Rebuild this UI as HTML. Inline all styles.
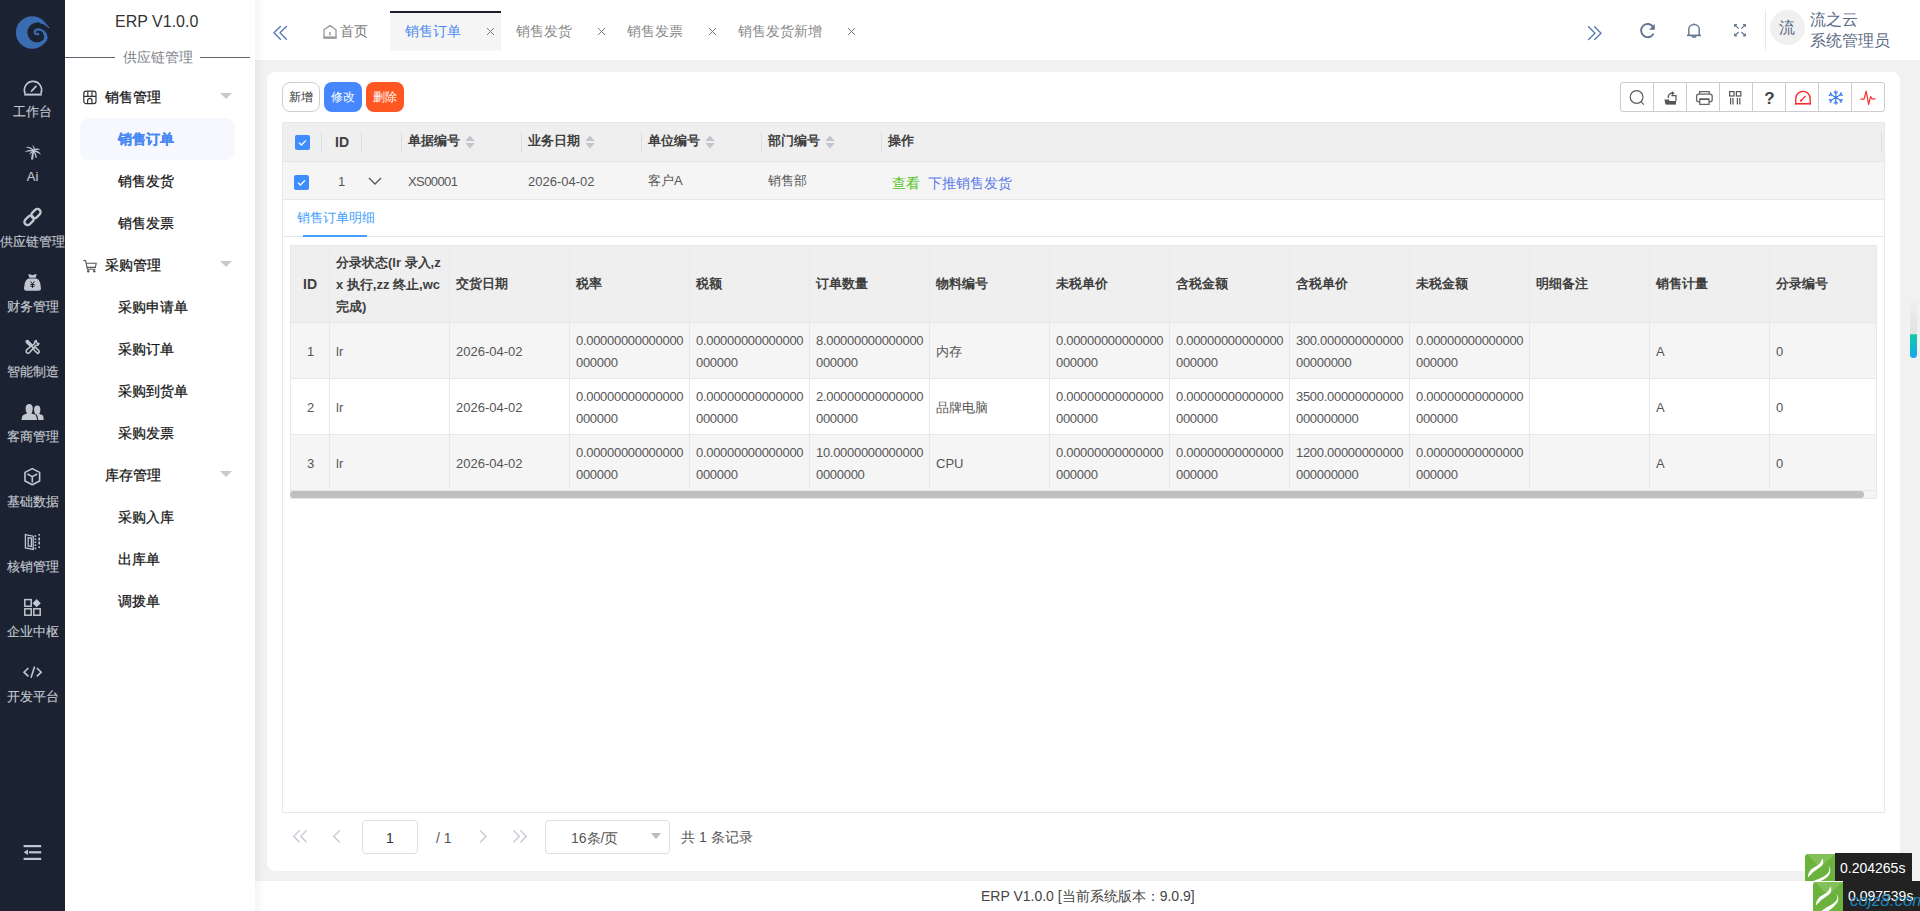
<!DOCTYPE html>
<html><head><meta charset="utf-8">
<style>
*{margin:0;padding:0;box-sizing:border-box}
html,body{width:1920px;height:911px;overflow:hidden}
body{position:relative;font-family:"Liberation Sans",sans-serif;background:#f1f1f1;color:#333}
.a{position:absolute}
.t{position:absolute;white-space:nowrap;line-height:20px}
svg{position:absolute;overflow:visible}
/* sidebar */
#side{left:0;top:0;width:65px;height:911px;background:#1b2232}
.si{position:absolute;left:0;width:65px;text-align:center;font-size:13px;line-height:20px;color:#c3c7cf;white-space:nowrap}
/* menu */
#menu{left:65px;top:0;width:190px;height:911px;background:#fff}
.mg{position:absolute;white-space:nowrap;left:105px;font-size:14px;line-height:20px;color:#111}
.mi{position:absolute;white-space:nowrap;left:118px;font-size:14px;line-height:20px;color:#141414}
.mg,.mi{-webkit-text-stroke:0.25px currentColor}
.si{-webkit-text-stroke:0.15px currentColor}
.caret{position:absolute;left:220px;width:0;height:0;border-left:6px solid transparent;border-right:6px solid transparent;border-top:6px solid #c6c9d0}
/* top bar */
#top{left:255px;top:0;width:1665px;height:60px;background:#fff}
.tab{position:absolute;white-space:nowrap;top:21px;font-size:14px;line-height:20px;color:#8a8a8a}
.x{position:absolute;width:9px;height:9px}
/* card */
#card{left:267px;top:72px;width:1633px;height:799px;background:#fff;border-radius:8px}
.btn{position:absolute;top:82px;height:30px;width:38px;border-radius:8px;font-size:12px;line-height:30px;text-align:center}
.tb{position:absolute;top:82px;height:30px;border:1px solid #ccc;border-radius:3px;background:#fff}
.hd{position:absolute;font-size:13px;font-weight:bold;color:#404040;line-height:20px;white-space:nowrap}
.cell{position:absolute;font-size:13px;color:#555;line-height:20px;white-space:nowrap}
.num{position:absolute;font-size:13px;color:#555;line-height:22px;white-space:nowrap;letter-spacing:-0.3px}
.vl{position:absolute;width:1px;background:#e6e8ee}
.hl{position:absolute;height:1px;background:#e6e8ee}
</style></head><body>

<!-- ============ SIDEBAR ============ -->
<div id="side" class="a">
  <svg style="left:12px;top:12px" width="40" height="40" viewBox="0 0 40 40">
  <circle cx="20.2" cy="20.5" r="16.3" fill="#3a6cb2"/>
  <circle cx="25.2" cy="20.4" r="9.9" fill="#1b2232"/>
  <path d="M25 10.6 Q31 10.2 35.2 14.4 L37.5 13 L40 16 L40 25 L34.6 25 Q35.6 20 33.8 16.4 Q30.6 12 25 10.6 Z" fill="#1b2232"/>
  <path d="M28.4 10.9 Q33.6 11.6 36.7 15.6" fill="none" stroke="#3a6cb2" stroke-width="1.3" stroke-linecap="round"/>
  <path d="M27.2 21.9 Q23.2 22.6 22.7 20.4 Q22.6 17.7 25.8 17.4 Q30.6 17.4 32.9 21.4" fill="none" stroke="#3a6cb2" stroke-width="2.2"/>
  <path d="M32.2 20.2 Q34.6 24.4 33.4 27.6 Q32 30 28.8 31.2" fill="none" stroke="#3a6cb2" stroke-width="3.2"/>
</svg>
</div>

<div class="a" style="left:0;top:0">
  <!-- dashboard -->
  <svg style="left:22px;top:79px" width="22" height="18" viewBox="0 0 22 18">
    <path d="M3.2 14.6 A8.6 8.6 0 1 1 18.8 14.6" fill="none" stroke="#c2c6ce" stroke-width="1.7"/>
    <path d="M2.2 15.6 H19.8" stroke="#c2c6ce" stroke-width="2"/>
    <path d="M9.6 12 L14 7.4" stroke="#c2c6ce" stroke-width="1.8" stroke-linecap="round"/>
  </svg>
  <div class="si" style="top:102px">工作台</div>
  <!-- palm -->
  <svg style="left:20px;top:140px" width="25" height="25" viewBox="0 0 25 25">
    <g fill="#c2c6ce">
      <path d="M13.6 9.6 Q9.6 5.6 5.6 7 Q9.6 8.4 13.4 10.6 Z"/>
      <path d="M13.6 9.8 Q8.6 9.2 4.4 11.8 Q9.4 11.6 13.4 11 Z"/>
      <path d="M13.8 9.8 Q13.6 6.4 12 5 Q15 6.4 15 9.8 Z"/>
      <path d="M13.4 9.4 Q17.4 7.4 20.2 9.4 Q16.8 9.8 13.8 10.8 Z"/>
      <path d="M13.8 10 Q18.6 10.4 21 14.4 Q17.2 12.6 13.6 11.2 Z"/>
      <path d="M13.8 10 Q10.2 11.4 9 15 Q11.6 12.8 14 11.2 Z"/>
      <path d="M12.8 10 Q11.6 14.6 11 19.4 L13.2 19.4 Q13.4 14.6 14.4 10.2 Z"/>
      <path d="M14.2 10.2 Q16.2 13.6 17 17.8 L15.6 17.8 Q14.8 14 13.4 10.8 Z"/>
    </g>
  </svg>
  <div class="si" style="top:167px">Ai</div>
  <!-- link -->
  <svg style="left:20px;top:204px" width="25" height="25" viewBox="0 0 25 25">
    <g fill="none" stroke="#c2c6ce" stroke-width="2.3" transform="rotate(-45 12.5 13)">
      <rect x="2.4" y="9.8" width="10.6" height="6.4" rx="3.2"/>
      <rect x="12" y="9.8" width="10.6" height="6.4" rx="3.2"/>
    </g>
  </svg>
  <div class="si" style="top:232px">供应链管理</div>
  <!-- money bag -->
  <svg style="left:20px;top:269px" width="25" height="25" viewBox="0 0 25 25">
    <path d="M8.2 5.2 Q10.5 5 12.5 6.2 Q14.5 5 16.8 5.2 L15.6 8.8 H9.4 Z" fill="#c2c6ce"/>
    <path d="M8.4 9.6 H16.6 Q19.2 10.5 20.2 14 L21 19.4 Q21 21.8 18.6 21.8 H6.4 Q4 21.8 4 19.4 L4.8 14 Q5.8 10.5 8.4 9.6 Z" fill="#c2c6ce"/>
    <g stroke="#1b2232" stroke-width="1" fill="none">
      <path d="M10.6 12.4 L12.5 15 L14.4 12.4"/><path d="M12.5 15 V18.8"/><path d="M10.4 15.6 H14.6"/><path d="M10.4 17.2 H14.6"/>
    </g>
  </svg>
  <div class="si" style="top:297px">财务管理</div>
  <!-- tools -->
  <svg style="left:20px;top:335px" width="25" height="25" viewBox="0 0 25 25">
    <g fill="none" stroke="#c2c6ce" stroke-width="1.5" stroke-linejoin="round">
      <path d="M6.2 6 L7.8 5.6 L11.6 9.6 L10.2 11 L6.4 7.4 Z" fill="#c2c6ce"/>
      <path d="M10.8 10.4 L13.2 12.8"/>
      <path d="M13.4 13.2 L15.6 12.4 L19 15.8 Q19.6 17.8 17.8 18.6 L14.2 15.2 Z"/>
      <path d="M16.2 5.4 Q14.2 6.2 14.6 8.6 L7 14.4 Q5.6 15.6 6.4 17.4 Q7.8 18.8 9.6 17.6 L15.6 10.4 Q18.2 10.6 19 8.6 L17.4 8.4 L16.4 7 Z"/>
    </g>
  </svg>
  <div class="si" style="top:362px">智能制造</div>
  <!-- users -->
  <svg style="left:20px;top:400px" width="25" height="25" viewBox="0 0 25 25">
    <path d="M9.2 4 Q12.8 4 12.8 8.6 Q12.8 12 11.4 13.6 Q15.6 14.4 16.4 15.6 Q17 17.6 17 20 H1.6 Q1.6 16.4 3 15.2 Q4.6 14.2 7 13.6 Q5.6 12 5.6 8.6 Q5.6 4 9.2 4 Z" fill="#c2c6ce"/>
    <path d="M17.2 5.4 Q20.4 5.4 20.4 9.4 Q20.4 12.4 19.2 14 Q22.2 14.6 23 15.6 Q23.6 17.4 23.6 20 H17.8 Q17.8 16.8 17 15.2 Q16 14.4 15.2 14 Q14 12.4 14 9.4 Q14 5.4 17.2 5.4 Z" fill="#c2c6ce"/>
    <path d="M16.4 14.6 L17.8 20" stroke="#1b2232" stroke-width="0.8"/>
  </svg>
  <div class="si" style="top:427px">客商管理</div>
  <!-- cube -->
  <svg style="left:20px;top:464px" width="25" height="25" viewBox="0 0 25 25">
    <g fill="none" stroke="#c2c6ce" stroke-width="1.6" stroke-linejoin="round">
      <path d="M12.3 4.6 L19.6 8.4 V17 L12.3 20.8 L5 17 V8.4 Z"/>
      <path d="M7.4 10 L12.3 12.6 L17.2 10 M12.3 12.6 V18.6"/>
    </g>
  </svg>
  <div class="si" style="top:492px">基础数据</div>
  <!-- verification -->
  <svg style="left:20px;top:529px" width="25" height="25" viewBox="0 0 25 25">
    <g fill="none" stroke="#c2c6ce" stroke-width="1.3">
      <path d="M5.4 5.6 L13.2 7.2 V20.4 L5.4 19 Z"/>
      <path d="M8.2 8.6 L11.4 9 V17.4 L8.2 17 Z"/>
    </g>
    <g fill="#c2c6ce">
      <rect x="14.6" y="6.2" width="1.6" height="1.6"/><rect x="14.6" y="9.4" width="1.6" height="1.6"/><rect x="14.6" y="12.4" width="1.6" height="1.6"/><rect x="14.6" y="15.4" width="1.6" height="1.6"/><rect x="14.6" y="18.6" width="1.6" height="1.6"/>
      <rect x="18.4" y="5" width="1.6" height="1.6"/><rect x="18.4" y="8.6" width="1.6" height="2.8"/><rect x="18.4" y="12.6" width="1.6" height="2.8"/><rect x="18.4" y="17.4" width="1.6" height="1.6"/>
    </g>
  </svg>
  <div class="si" style="top:557px">核销管理</div>
  <!-- apps -->
  <svg style="left:20px;top:594px" width="25" height="25" viewBox="0 0 25 25">
    <g fill="none" stroke="#c2c6ce" stroke-width="1.5">
      <rect x="4.8" y="5.6" width="6.4" height="6.6"/>
      <rect x="4.8" y="14.8" width="6.4" height="6.4"/>
      <rect x="13.8" y="14.8" width="6.4" height="6.4"/>
    </g>
    <path d="M16.6 5 L20.8 9.2 L16.6 13.2 L12.6 9.2 Z" fill="#c2c6ce"/>
  </svg>
  <div class="si" style="top:622px">企业中枢</div>
  <!-- code -->
  <svg style="left:20px;top:660px" width="25" height="25" viewBox="0 0 25 25">
    <g fill="none" stroke="#c2c6ce" stroke-width="1.6">
      <path d="M8.4 8 L4 12.2 L8.4 16.4"/>
      <path d="M14.6 6.6 L11 17.8"/>
      <path d="M16.8 8 L21.2 12.2 L16.8 16.4"/>
    </g>
  </svg>
  <div class="si" style="top:687px">开发平台</div>
  <!-- collapse -->
  <svg style="left:20px;top:840px" width="25" height="25" viewBox="0 0 25 25">
    <g fill="#c2c6ce">
      <rect x="3.6" y="5" width="17.6" height="2.2"/>
      <rect x="9" y="11.2" width="12.2" height="2.2"/>
      <rect x="3.6" y="17.8" width="17.6" height="2.2"/>
      <path d="M3.6 12.3 L8 9.6 V15 Z"/>
    </g>
  </svg>
</div>


<!-- ============ MENU PANEL ============ -->
<div id="menu" class="a"></div>

<div class="a" style="left:0;top:0">
  <div class="t" style="left:115px;top:12px;font-size:16px;color:#333">ERP V1.0.0</div>
  <div class="a" style="left:65px;top:57px;width:50px;height:1px;background:#5f636b"></div>
  <div class="a" style="left:200px;top:57px;width:50px;height:1px;background:#5f636b"></div>
  <div class="t" style="left:123px;top:47px;font-size:14px;color:#7c7f87">供应链管理</div>

  <svg style="left:83px;top:90px" width="14" height="15" viewBox="0 0 14 15">
    <g fill="none" stroke="#333" stroke-width="1.2">
      <rect x="0.8" y="1.2" width="12.2" height="12.4" rx="2.4"/>
      <path d="M0.8 6.4 H13 M4.8 1.2 V6.4 M9 1.2 V6.4 M4.6 13.6 V10.6 A2.2 2.2 0 0 1 9 10.6 V13.6"/>
    </g>
  </svg>
  <div class="mg" style="top:87px">销售管理</div>
  <div class="caret" style="top:93px"></div>
  <div class="a" style="left:80px;top:118px;width:155px;height:42px;background:#f6f8fe;border-radius:9px"></div>
  <div class="mi" style="top:129px;color:#4a89f3;font-weight:bold">销售订单</div>
  <div class="mi" style="top:171px">销售发货</div>
  <div class="mi" style="top:213px">销售发票</div>

  <svg style="left:83px;top:259px" width="14" height="14" viewBox="0 0 14 14">
    <g fill="none" stroke="#555" stroke-width="1.1">
      <path d="M0.4 1.4 L2.6 1.8 L4.4 10.2 H12.4"/>
      <path d="M3.2 4.2 H13.2 L12.4 8.4 H4"/>
    </g>
    <circle cx="5.2" cy="12.2" r="1.2" fill="#555"/><circle cx="11.2" cy="12.2" r="1.2" fill="#555"/>
  </svg>
  <div class="mg" style="top:255px">采购管理</div>
  <div class="caret" style="top:261px"></div>
  <div class="mi" style="top:297px">采购申请单</div>
  <div class="mi" style="top:339px">采购订单</div>
  <div class="mi" style="top:381px">采购到货单</div>
  <div class="mi" style="top:423px">采购发票</div>

  <div class="mg" style="top:465px">库存管理</div>
  <div class="caret" style="top:471px"></div>
  <div class="mi" style="top:507px">采购入库</div>
  <div class="mi" style="top:549px">出库单</div>
  <div class="mi" style="top:591px">调拨单</div>
</div>


<!-- ============ TOP BAR ============ -->
<div id="top" class="a"></div>

<div class="a" style="left:0;top:0">
  
  <svg style="left:268px;top:18px" width="30" height="30" viewBox="0 0 30 30">
    <g fill="none" stroke="#5a7db4" stroke-width="1.45" stroke-linecap="round" stroke-linejoin="round">
      <path d="M12.4 8.4 L6 14.8 L12.4 21.2"/><path d="M18.4 8.4 L12 14.8 L18.4 21.2"/>
    </g>
  </svg>
  <svg style="left:318px;top:18px" width="30" height="30" viewBox="0 0 30 30">
    <g fill="none" stroke="#9a9a9a" stroke-width="1.5" stroke-linejoin="round">
      <path d="M6 11.8 L12 7.6 L18 11.8 V20 H6 Z" stroke-width="1.35"/>
    </g>
    <path d="M5.4 19.4 H18.6" stroke="#9a9a9a" stroke-width="2"/>
    <path d="M12 14 V17.6" stroke="#9a9a9a" stroke-width="1.4"/>
  </svg>
  <div class="tab" style="left:340px;top:21px;color:#7d7d7d">首页</div>

  <div class="a" style="left:390px;top:11px;width:111px;height:40px;background:#f5f5f5;border-top:2px solid #1a1e2c"></div>
  <div class="tab" style="left:405px;top:21px;color:#4a89f3">销售订单</div>
  <svg class="x" style="left:486px;top:27px" viewBox="0 0 9 9"><path d="M1 1 L8 8 M8 1 L1 8" stroke="#7a7a7a" stroke-width="1"/></svg>
  <div class="tab" style="left:516px;top:21px">销售发货</div>
  <svg class="x" style="left:597px;top:27px" viewBox="0 0 9 9"><path d="M1 1 L8 8 M8 1 L1 8" stroke="#7a7a7a" stroke-width="1"/></svg>
  <div class="tab" style="left:627px;top:21px">销售发票</div>
  <svg class="x" style="left:708px;top:27px" viewBox="0 0 9 9"><path d="M1 1 L8 8 M8 1 L1 8" stroke="#7a7a7a" stroke-width="1"/></svg>
  <div class="tab" style="left:738px;top:21px">销售发货新增</div>
  <svg class="x" style="left:847px;top:27px" viewBox="0 0 9 9"><path d="M1 1 L8 8 M8 1 L1 8" stroke="#7a7a7a" stroke-width="1"/></svg>

  <svg style="left:1582px;top:18px" width="30" height="30" viewBox="0 0 30 30">
    <g fill="none" stroke="#5a7db4" stroke-width="1.45" stroke-linecap="round" stroke-linejoin="round">
      <path d="M6.6 8.8 L13 15.2 L6.6 21.6"/><path d="M12.6 8.8 L19 15.2 L12.6 21.6"/>
    </g>
  </svg>
  <svg style="left:1635px;top:18px" width="25" height="25" viewBox="0 0 25 25">
    <path d="M18.4 9.2 A6.6 6.6 0 1 0 18.6 15.6" fill="none" stroke="#61738f" stroke-width="1.9"/>
    <path d="M19.8 6 V11.8 H14 Z" fill="#61738f"/>
  </svg>
  <svg style="left:1682px;top:18px" width="25" height="25" viewBox="0 0 25 25">
    <g fill="none" stroke="#61738f" stroke-width="1.4">
      <path d="M6.8 17.4 V11 A5.2 4.4 0 0 1 17.2 11 V17.4"/>
      <path d="M10.2 17.6 A1.8 1.8 0 0 0 13.8 17.6"/>
    </g>
    <path d="M5 17.4 H19" stroke="#61738f" stroke-width="1.6"/>
    <path d="M12 5.4 V6.8" stroke="#61738f" stroke-width="1.4"/>
  </svg>
  <svg style="left:1682px;top:18px" width="70" height="25" viewBox="0 0 70 25">
    <g fill="none" stroke="#61738f" stroke-width="1.1">
      <path d="M52.6 6.6 L56.6 10.6 M52.6 6.6 H55 M52.6 6.6 V9"/>
      <path d="M63.4 6.6 L59.4 10.6 M63.4 6.6 H61 M63.4 6.6 V9"/>
      <path d="M52.6 18 L56.6 14 M52.6 18 H55 M52.6 18 V15.6"/>
      <path d="M63.4 18 L59.4 14 M63.4 18 H61 M63.4 18 V15.6"/>
    </g>
  </svg>
  <div class="a" style="left:1765px;top:10px;width:1px;height:40px;background:#e6e8ec"></div>
  <div class="a" style="left:1770px;top:10px;width:35px;height:35px;border-radius:50%;background:#f0f0f0"></div>
  <div class="t" style="left:1779px;top:18px;font-size:16px;color:#5b6b86">流</div>
  <div class="t" style="left:1810px;top:10px;font-size:16px;color:#5b6b86">流之云</div>
  <div class="t" style="left:1810px;top:31px;font-size:16px;color:#5b6b86">系统管理员</div>
</div>


<!-- ============ CARD ============ -->
<div id="card" class="a"></div>
<div class="btn" style="left:282px;border:1px solid #cfcfcf;background:#fff;color:#333;line-height:28px">新增</div>
<div class="btn" style="left:324px;background:#4787fd;color:#fff">修改</div>
<div class="btn" style="left:366px;background:#ff5722;color:#fff">删除</div>
<div class="tb" style="left:1620px;width:265px"></div>
<div class="a" style="left:1653px;top:82px;width:1px;height:30px;background:#ccc"></div>
<div class="a" style="left:1686px;top:82px;width:1px;height:30px;background:#ccc"></div>
<div class="a" style="left:1719px;top:82px;width:1px;height:30px;background:#ccc"></div>
<div class="a" style="left:1752px;top:82px;width:1px;height:30px;background:#ccc"></div>
<div class="a" style="left:1785px;top:82px;width:1px;height:30px;background:#ccc"></div>
<div class="a" style="left:1818px;top:82px;width:1px;height:30px;background:#ccc"></div>
<div class="a" style="left:1851px;top:82px;width:1px;height:30px;background:#ccc"></div>

<svg style="left:1621px;top:82px" width="264" height="30" viewBox="0 0 264 30">
  <!-- search -->
  <circle cx="15.6" cy="15" r="6.4" fill="none" stroke="#5a5a5a" stroke-width="1.15"/>
  <path d="M20.2 19.8 L22.8 22.6" stroke="#5a5a5a" stroke-width="1.15"/>
  <!-- export -->
  <path d="M43.6 19.6 H55 V22.2 H44.8 Z" fill="#555"/>
  <path d="M43.4 17.6 H48.2 V19 H55 V22.4 H44.8 Z" fill="#555"/>
  <path d="M50.4 13.6 H55 V19" fill="none" stroke="#555" stroke-width="1.2"/>
  <path d="M47.2 16 Q47.2 11.2 51.4 11.2" fill="none" stroke="#555" stroke-width="1.3"/>
  <path d="M50.8 9 L53.6 11.2 L50.8 13.4 Z" fill="#555"/>
  <!-- print -->
  <g fill="none" stroke="#666" stroke-width="1.3">
    <path d="M78.6 12.2 V9.6 H88.2 V12.2"/>
    <rect x="75.6" y="12.2" width="15.6" height="7.6" rx="2.2"/>
    <rect x="78.8" y="17.2" width="9.2" height="5.2" fill="#fff"/>
  </g>
  <path d="M78.6 17.2 H88.2" stroke="#555" stroke-width="1.4"/>
  <!-- columns -->
  <g fill="none" stroke="#555" stroke-width="1.2">
    <rect x="108.6" y="9.6" width="4.4" height="4.4"/><rect x="115.4" y="9.6" width="4.4" height="4.4"/>
    <path d="M109.6 16 V22.4 M112 16 V22.4 M116.4 16 V22.4 M118.8 16 V22.4"/>
  </g>
  <!-- question -->
  <text x="148.5" y="22" font-family="Liberation Sans" font-weight="bold" font-size="17" fill="#444" text-anchor="middle">?</text>
  <!-- gauge -->
  <path d="M174.8 22.4 V16.6 A7.2 7.2 0 0 1 189.2 16.6 V22.4" fill="none" stroke="#ff2020" stroke-width="1.3"/>
  <path d="M174.2 21.8 H189.8" stroke="#ff2020" stroke-width="1.5"/>
  <path d="M180 18.6 L184.6 14" stroke="#ff2020" stroke-width="1.2"/>
  <circle cx="180" cy="18.6" r="1.1" fill="#ff2020"/>
  <!-- snowflake -->
  <g stroke="#3f7ff0" stroke-width="1.2" fill="none" stroke-linecap="round">
    <path d="M214.8 8.8 V22.2 M209 12.1 L220.6 18.9 M209 18.9 L220.6 12.1"/>
    <path d="M213.2 9.8 L214.8 11.4 L216.4 9.8 M213.2 21.2 L214.8 19.6 L216.4 21.2"/>
    <path d="M209.4 10.6 L210.6 12.8 L208.2 13.4 M220.2 20.4 L219 18.2 L221.4 17.6"/>
    <path d="M208.2 17.6 L210.6 18.2 L209.4 20.4 M221.4 13.4 L219 12.8 L220.2 10.6"/>
  </g>
  <circle cx="214.8" cy="15.5" r="1.5" fill="#3f7ff0"/>
  <!-- pulse -->
  <path d="M239.4 17.2 H243 L245.2 9.2 L247.6 22.4 L249.6 14.6 L251 16.8 H254.4" fill="none" stroke="#ff2a2a" stroke-width="1.2" stroke-linejoin="round"/>
</svg>
<div class="a" style="left:282px;top:122px;width:1603px;height:691px;border:1px solid #e8e8e8"></div>
<div class="a" style="left:283px;top:123px;width:1601px;height:39px;background:#efefef;border-bottom:1px solid #e4e6ea"></div>
<div class="a" style="left:283px;top:162px;width:1601px;height:38px;background:#f5f5f5;border-bottom:1px solid #e6e8ec"></div>
<div class="a" style="left:295px;top:135px;width:15px;height:15px;background:#3f8cff;border-radius:2px"></div><svg style="left:295px;top:135px" width="15" height="15" viewBox="0 0 15 15"><path d="M4 7.6 L6.4 10 L11 5.4" fill="none" stroke="#fff" stroke-width="1.3"/></svg>
<div class="a" style="left:294px;top:175px;width:15px;height:15px;background:#3f8cff;border-radius:2px"></div><svg style="left:294px;top:175px" width="15" height="15" viewBox="0 0 15 15"><path d="M4 7.6 L6.4 10 L11 5.4" fill="none" stroke="#fff" stroke-width="1.3"/></svg>
<div class="vl" style="left:321px;top:132px;height:20px;background:#dcdee3"></div>
<div class="vl" style="left:361px;top:132px;height:20px;background:#dcdee3"></div>
<div class="vl" style="left:401px;top:132px;height:20px;background:#dcdee3"></div>
<div class="vl" style="left:521px;top:132px;height:20px;background:#dcdee3"></div>
<div class="vl" style="left:641px;top:132px;height:20px;background:#dcdee3"></div>
<div class="vl" style="left:761px;top:132px;height:20px;background:#dcdee3"></div>
<div class="vl" style="left:881px;top:132px;height:20px;background:#dcdee3"></div>
<div class="vl" style="left:1881px;top:132px;height:20px;background:#dcdee3"></div>
<div class="hd" style="left:335px;top:132px;font-size:14px">ID</div>
<div class="hd" style="left:408px;top:131px">单据编号</div>
<div class="hd" style="left:528px;top:131px">业务日期</div>
<div class="hd" style="left:648px;top:131px">单位编号</div>
<div class="hd" style="left:768px;top:131px">部门编号</div>
<div class="hd" style="left:888px;top:131px">操作</div>
<svg style="left:465px;top:135px" width="10" height="14" viewBox="0 0 10 14"><path d="M0.2 6 L5 0.4 L9.8 6 Z M0.2 8 L5 13.6 L9.8 8 Z" fill="#c3c6cd"/></svg>
<svg style="left:585px;top:135px" width="10" height="14" viewBox="0 0 10 14"><path d="M0.2 6 L5 0.4 L9.8 6 Z M0.2 8 L5 13.6 L9.8 8 Z" fill="#c3c6cd"/></svg>
<svg style="left:705px;top:135px" width="10" height="14" viewBox="0 0 10 14"><path d="M0.2 6 L5 0.4 L9.8 6 Z M0.2 8 L5 13.6 L9.8 8 Z" fill="#c3c6cd"/></svg>
<svg style="left:825px;top:135px" width="10" height="14" viewBox="0 0 10 14"><path d="M0.2 6 L5 0.4 L9.8 6 Z M0.2 8 L5 13.6 L9.8 8 Z" fill="#c3c6cd"/></svg>
<div class="cell" style="left:338px;top:172px">1</div>
<svg style="left:368px;top:176px" width="14" height="10" viewBox="0 0 14 10"><path d="M1 2 L7 8 L13 2" fill="none" stroke="#555" stroke-width="1.3"/></svg>
<div class="cell" style="left:408px;top:172px;letter-spacing:-0.6px">XS00001</div>
<div class="cell" style="left:528px;top:172px">2026-04-02</div>
<div class="cell" style="left:648px;top:171px">客户A</div>
<div class="cell" style="left:768px;top:171px">销售部</div>
<div class="cell" style="left:892px;top:173px;font-size:14px;color:#52c41a">查看</div>
<div class="cell" style="left:928px;top:173px;font-size:14px;color:#5a79e6">下推销售发货</div>
<div class="cell" style="left:297px;top:208px;color:#409eff">销售订单明细</div>
<div class="a" style="left:283px;top:236px;width:1601px;height:1px;background:#e4e7ed"></div>
<div class="a" style="left:303px;top:235px;width:64px;height:2px;background:#409eff"></div>
<div class="a" style="left:290px;top:245px;width:1587px;height:254px;background:#fff;border:1px solid #e6e8ec"></div>
<div class="a" style="left:291px;top:246px;width:1585px;height:76px;background:#efefef"></div>
<div class="a" style="left:290px;top:322px;width:1586px;height:56px;background:#f5f5f5"></div>
<div class="a" style="left:290px;top:434px;width:1586px;height:56px;background:#f5f5f5"></div>
<div class="hl" style="left:290px;top:322px;width:1586px"></div>
<div class="hl" style="left:290px;top:378px;width:1586px"></div>
<div class="hl" style="left:290px;top:434px;width:1586px"></div>
<div class="hl" style="left:290px;top:490px;width:1586px"></div>
<div class="vl" style="left:290px;top:245px;height:253px"></div>
<div class="vl" style="left:329px;top:245px;height:245px"></div>
<div class="vl" style="left:449px;top:245px;height:245px"></div>
<div class="vl" style="left:569px;top:245px;height:245px"></div>
<div class="vl" style="left:689px;top:245px;height:245px"></div>
<div class="vl" style="left:809px;top:245px;height:245px"></div>
<div class="vl" style="left:929px;top:245px;height:245px"></div>
<div class="vl" style="left:1049px;top:245px;height:245px"></div>
<div class="vl" style="left:1169px;top:245px;height:245px"></div>
<div class="vl" style="left:1289px;top:245px;height:245px"></div>
<div class="vl" style="left:1409px;top:245px;height:245px"></div>
<div class="vl" style="left:1529px;top:245px;height:245px"></div>
<div class="vl" style="left:1649px;top:245px;height:245px"></div>
<div class="vl" style="left:1769px;top:245px;height:245px"></div>
<div class="a" style="left:291px;top:491px;width:1585px;height:7px;background:#f4f4f4"></div>
<div class="a" style="left:290px;top:491px;width:1574px;height:7px;background:#bfbfbf;border-radius:3.5px"></div>
<div class="hd" style="left:303px;top:274px;font-size:14px">ID</div>
<div class="hd" style="left:336px;top:252px;line-height:22px">分录状态(lr 录入,z<br>x 执行,zz 终止,wc<br>完成)</div>
<div class="hd" style="left:456px;top:274px">交货日期</div>
<div class="hd" style="left:576px;top:274px">税率</div>
<div class="hd" style="left:696px;top:274px">税额</div>
<div class="hd" style="left:816px;top:274px">订单数量</div>
<div class="hd" style="left:936px;top:274px">物料编号</div>
<div class="hd" style="left:1056px;top:274px">未税单价</div>
<div class="hd" style="left:1176px;top:274px">含税金额</div>
<div class="hd" style="left:1296px;top:274px">含税单价</div>
<div class="hd" style="left:1416px;top:274px">未税金额</div>
<div class="hd" style="left:1536px;top:274px">明细备注</div>
<div class="hd" style="left:1656px;top:274px">销售计量</div>
<div class="hd" style="left:1776px;top:274px">分录编号</div>
<div class="cell" style="left:307px;top:342px">1</div>
<div class="cell" style="left:336px;top:342px">lr</div>
<div class="cell" style="left:456px;top:342px">2026-04-02</div>
<div class="num" style="left:576px;top:330px">0.00000000000000<br>000000</div>
<div class="num" style="left:696px;top:330px">0.00000000000000<br>000000</div>
<div class="num" style="left:816px;top:330px">8.00000000000000<br>000000</div>
<div class="cell" style="left:936px;top:342px">内存</div>
<div class="num" style="left:1056px;top:330px">0.00000000000000<br>000000</div>
<div class="num" style="left:1176px;top:330px">0.00000000000000<br>000000</div>
<div class="num" style="left:1296px;top:330px">300.000000000000<br>00000000</div>
<div class="num" style="left:1416px;top:330px">0.00000000000000<br>000000</div>
<div class="cell" style="left:1656px;top:342px">A</div>
<div class="cell" style="left:1776px;top:342px">0</div>
<div class="cell" style="left:307px;top:398px">2</div>
<div class="cell" style="left:336px;top:398px">lr</div>
<div class="cell" style="left:456px;top:398px">2026-04-02</div>
<div class="num" style="left:576px;top:386px">0.00000000000000<br>000000</div>
<div class="num" style="left:696px;top:386px">0.00000000000000<br>000000</div>
<div class="num" style="left:816px;top:386px">2.00000000000000<br>000000</div>
<div class="cell" style="left:936px;top:398px">品牌电脑</div>
<div class="num" style="left:1056px;top:386px">0.00000000000000<br>000000</div>
<div class="num" style="left:1176px;top:386px">0.00000000000000<br>000000</div>
<div class="num" style="left:1296px;top:386px">3500.00000000000<br>000000000</div>
<div class="num" style="left:1416px;top:386px">0.00000000000000<br>000000</div>
<div class="cell" style="left:1656px;top:398px">A</div>
<div class="cell" style="left:1776px;top:398px">0</div>
<div class="cell" style="left:307px;top:454px">3</div>
<div class="cell" style="left:336px;top:454px">lr</div>
<div class="cell" style="left:456px;top:454px">2026-04-02</div>
<div class="num" style="left:576px;top:442px">0.00000000000000<br>000000</div>
<div class="num" style="left:696px;top:442px">0.00000000000000<br>000000</div>
<div class="num" style="left:816px;top:442px">10.0000000000000<br>0000000</div>
<div class="cell" style="left:936px;top:454px">CPU</div>
<div class="num" style="left:1056px;top:442px">0.00000000000000<br>000000</div>
<div class="num" style="left:1176px;top:442px">0.00000000000000<br>000000</div>
<div class="num" style="left:1296px;top:442px">1200.00000000000<br>000000000</div>
<div class="num" style="left:1416px;top:442px">0.00000000000000<br>000000</div>
<div class="cell" style="left:1656px;top:454px">A</div>
<div class="cell" style="left:1776px;top:454px">0</div>

<svg style="left:288px;top:825px" width="250" height="24" viewBox="0 0 250 24">
  <g fill="none" stroke="#c0c4cc" stroke-width="1.3">
    <path d="M11.6 5.4 L5.8 11.4 L11.6 17.4 M18.6 5.4 L12.8 11.4 L18.6 17.4"/>
    <path d="M51.8 5.4 L45.8 11.4 L51.8 17.4"/>
    <path d="M192 5.4 L198 11.4 L192 17.4"/>
    <path d="M225.4 5.4 L231.2 11.4 L225.4 17.4 M232.4 5.4 L238.2 11.4 L232.4 17.4"/>
  </g>
</svg>
<div class="a" style="left:362px;top:820px;width:56px;height:34px;border:1px solid #dcdfe6;border-radius:4px"></div>
<div class="t" style="left:386px;top:828px;font-size:14px;color:#333">1</div>
<div class="t" style="left:436px;top:828px;font-size:14px;color:#555">/ 1</div>
<div class="a" style="left:545px;top:820px;width:125px;height:34px;border:1px solid #dcdfe6;border-radius:4px"></div>
<div class="t" style="left:571px;top:828px;font-size:14px;color:#555">16条/页</div>
<div class="a" style="left:651px;top:833px;width:0;height:0;border-left:5.5px solid transparent;border-right:5.5px solid transparent;border-top:6.5px solid #b8bcc4"></div>
<div class="t" style="left:681px;top:827px;font-size:14px;color:#555">共 1 条记录</div>



<div class="a" style="left:255px;top:881px;width:1665px;height:30px;background:#fff"></div>
<div class="t" style="left:981px;top:886px;font-size:14px;color:#444">ERP V1.0.0 [当前系统版本：9.0.9]</div>
<div class="a" style="left:255px;top:0;width:10px;height:911px;background:linear-gradient(to right,rgba(0,0,0,0.035),rgba(0,0,0,0))"></div>
<div class="a" style="left:1910px;top:300px;width:7px;height:58px;border-radius:4px;background:linear-gradient(to bottom,#efefef 0,#e2e2e2 58%,#11c9a4 60%,#16a8f0 100%)"></div>
<!-- badges -->
<svg style="left:1805px;top:854px" width="30" height="27" viewBox="0 0 30 27">
  <path d="M3 0 H30 V27 H0 V3 Q0 0 3 0 Z" fill="#6cb33e"/>
  <path d="M2 0 H30 L15 13.5 Z" fill="#83c05a"/>
  <path d="M17.2 4.2 Q20.6 10 13.6 14.2 Q7.6 17.6 2.8 23.6 Q2.8 16.4 10.6 12.6 Q16.4 9.6 17.2 4.2 Z" fill="#fff"/>
  <path d="M23.6 11.6 Q26.4 18.2 18.8 22.6 Q12.6 25.8 8.4 27 H15.6 Q21.4 25 24.4 20.6 Q26.6 16 23.6 11.6 Z" fill="#fff"/>
</svg>
<div class="a" style="left:1835px;top:853px;width:77px;height:28px;background:#222"></div>
<div class="t" style="left:1840px;top:858px;font-size:14px;color:#fff">0.204265s</div>
<svg style="left:1813px;top:882px" width="30" height="29" viewBox="0 0 30 29">
  <path d="M3 0 H30 V29 H0 V3 Q0 0 3 0 Z" fill="#6cb33e"/>
  <path d="M2 0 H30 L15 13.5 Z" fill="#83c05a"/>
  <path d="M17.2 4.2 Q20.6 10 13.6 14.2 Q7.6 17.6 2.8 23.6 Q2.8 16.4 10.6 12.6 Q16.4 9.6 17.2 4.2 Z" fill="#fff"/>
  <path d="M23.6 11.6 Q26.4 18.2 18.8 22.6 Q12.6 25.8 8.4 29 H15.6 Q21.4 25 24.4 20.6 Q26.6 16 23.6 11.6 Z" fill="#fff"/>
</svg>
<div class="a" style="left:1843px;top:881px;width:77px;height:30px;background:#222"></div>
<div class="t" style="left:1848px;top:886px;font-size:14px;color:#fff">0.097539s</div>
<div class="t" style="left:1850px;top:891px;font-size:17px;color:#1d8fc6;font-style:italic;opacity:.9">cojz8.com</div>
</body></html>
